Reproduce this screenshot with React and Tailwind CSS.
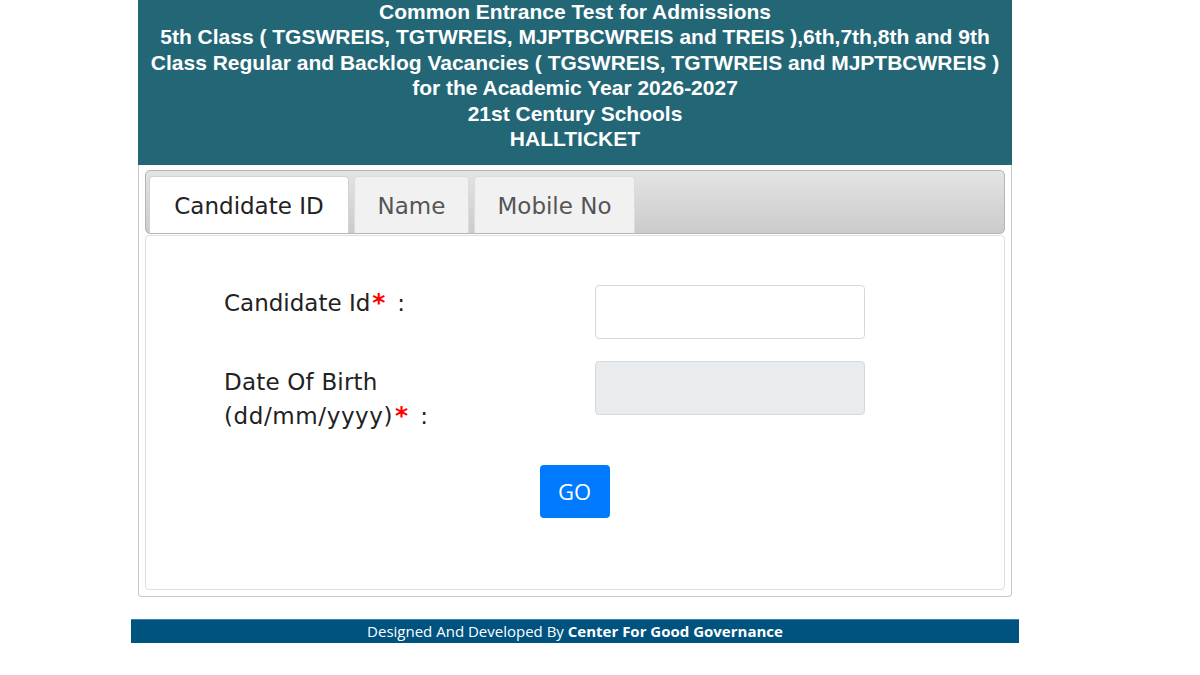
export default function App() {
  const lines = [
    "Common Entrance Test for Admissions",
    "5th Class ( TGSWREIS, TGTWREIS, MJPTBCWREIS and TREIS ),6th,7th,8th and 9th",
    "Class Regular and Backlog Vacancies ( TGSWREIS, TGTWREIS and MJPTBCWREIS )",
    "for the Academic Year 2026-2027",
    "21st Century Schools",
    "HALLTICKET",
  ];
  return (
    <div className="w-[1200px] h-[675px] bg-white relative">
      <div className="ml-[138px] w-[874px]">
        <div className="bg-[#236777] h-[165px] flex flex-col items-center text-white font-bold text-[21px] leading-[25.4px]" style={{ fontFamily: '"Liberation Sans", Arial, sans-serif' }}>
          <div className="-mt-[1px] flex flex-col items-center">
            {lines.map((l) => (
              <div key={l}>{l}</div>
            ))}
          </div>
        </div>
        <div className="border border-[#c8c8c8] border-t-0 rounded-b-[4px] h-[432px] px-[6px] pt-[5px]" style={{ fontFamily: '"DejaVu Sans", Verdana, sans-serif' }}>
          <div className="h-[64px] rounded-[5px] border border-[#b5b5b5] bg-gradient-to-b from-[#e4e4e4] to-[#cbcbcb] flex items-end pl-[3px] gap-[5px]">
            <div className="w-[200px] h-[57px] bg-white rounded-t-[4px] border border-[#d3d3d3] border-b-0 flex items-center justify-center pt-[2px] text-[23px] text-[#222]">
              Candidate ID
            </div>
            <div className="w-[115px] h-[57px] bg-[#f1f1f1] rounded-t-[4px] border border-[#dcdcdc] border-b-0 flex items-center justify-center pt-[2px] text-[23px] text-[#555]">
              Name
            </div>
            <div className="w-[161px] h-[57px] bg-[#f1f1f1] rounded-t-[4px] border border-[#dcdcdc] border-b-0 flex items-center justify-center pt-[2px] text-[23px] text-[#555]">
              Mobile No
            </div>
          </div>
          <div className="mt-[1px] h-[355px] border border-[#dedede] rounded-[4px] bg-white relative">
            <div className="flex pt-[49px]">
              <div className="w-[449px] pl-[78px] text-[23px] text-[#222] leading-[34px]">
                <div className="h-[54px] pt-[1px]">
                  <span>Candidate Id<span className="text-[#ff0000] font-bold text-[25px] ml-[2px]">*</span><span className="ml-[12px]">:</span></span>
                </div>
                <div className="mt-[22px] pt-[4px]">
                  <div className="tracking-[0.2px]">Date Of Birth</div>
                  <div><span className="tracking-[0.6px]">(dd/mm/yyyy)</span><span className="text-[#ff0000] font-bold text-[25px] ml-[2px]">*</span><span className="ml-[12px]">:</span></div>
                </div>
              </div>
              <div>
                <div className="w-[270px] h-[54px] border border-[#d8d8d8] rounded-[4px] bg-white"></div>
                <div className="mt-[22px] w-[270px] h-[54px] border border-[#d8d8d8] rounded-[4px] bg-[#e9ecef]"></div>
              </div>
            </div>
            <div className="flex justify-center mt-[32px]">
              <button className="ml-[-1px] w-[70px] h-[53px] bg-[#007bff] rounded-[4px] text-white text-[22px]" style={{ fontFamily: '"Open Sans", "Noto Sans", sans-serif' }}>
                GO
              </button>
            </div>
          </div>
        </div>
      </div>
      <div className="mt-[22px] ml-[131px] w-[888px] h-[24px] bg-[#00527f] border-t border-[#3d85b0] flex items-center justify-center text-white text-[15px]" style={{ fontFamily: '"Open Sans", "Noto Sans", sans-serif' }}>
        <span>Designed And Developed By <b>Center For Good Governance</b></span>
      </div>
    </div>
  );
}
